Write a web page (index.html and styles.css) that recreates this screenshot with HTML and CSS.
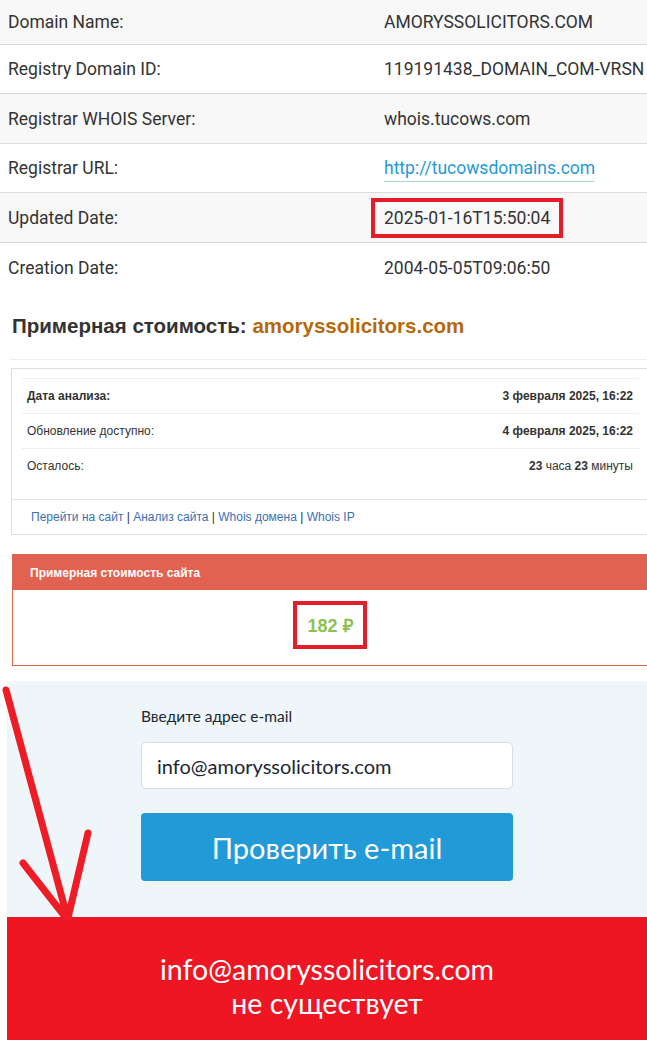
FILE: index.html
```html
<!DOCTYPE html>
<html lang="ru">
<head>
    <meta charset="UTF-8">
    <meta name="viewport" content="width=device-width, initial-scale=1.0">
    <title>amoryssolicitors.com</title>
    <link rel="stylesheet" href="styles.css">
</head>
<body>
    <!-- whois record -->
    <div class="whois">
        <div class="row"><span class="key">Domain Name:</span><span class="val">AMORYSSOLICITORS.COM</span></div>
        <div class="row"><span class="key">Registry Domain ID:</span><span class="val">119191438_DOMAIN_COM-VRSN</span></div>
        <div class="row"><span class="key">Registrar WHOIS Server:</span><span class="val">whois.tucows.com</span></div>
        <div class="row"><span class="key">Registrar URL:</span><span class="val"><a class="url" href="#">http://tucowsdomains.com</a></span></div>
        <div class="row"><span class="key">Updated Date:</span><span class="val"><span class="mark">2025-01-16T15:50:04</span></span></div>
        <div class="row"><span class="key">Creation Date:</span><span class="val">2004-05-05T09:06:50</span></div>
    </div>

    <!-- site cost -->
    <h2 class="cost-title">Примерная стоимость: <span class="domain">amoryssolicitors.com</span></h2>

    <div class="info">
        <div class="info-rows">
            <div class="info-row"><b>Дата анализа:</b><b>3 февраля 2025, 16:22</b></div>
            <div class="info-row"><span>Обновление доступно:</span><b>4 февраля 2025, 16:22</b></div>
            <div class="info-row"><span>Осталось:</span><span><b>23</b> часа <b>23</b> минуты</span></div>
        </div>
        <div class="info-links">
            <a href="#">Перейти на сайт</a> | <a href="#">Анализ сайта</a> | <a href="#">Whois домена</a> | <a href="#">Whois IP</a>
        </div>
    </div>

    <div class="panel">
        <div class="panel-head">Примерная стоимость сайта</div>
        <div class="panel-body"><span class="price">182 ₽</span></div>
    </div>

    <!-- email check -->
    <div class="check">
        <form class="check-form">
            <label class="check-label">Введите адрес e-mail</label>
            <input class="check-input" type="text" value="info@amoryssolicitors.com">
            <button class="check-btn" type="button">Проверить e-mail</button>
        </form>
        <div class="result">info@amoryssolicitors.com<br>не существует</div>
    </div>

    <svg class="arrow" width="100" height="250" viewBox="0 0 100 250">
        <path d="M6 20 L68 250 M23 193 L66 248 M88 163 L68 248" />
    </svg>
</body>
</html>
```

FILE: styles.css
```css
body {
    margin: 0;
    background: #fff;
    overflow-x: hidden;
    position: relative;
}

/* whois */
.whois {
    font-family: Roboto, sans-serif;
    font-size: 17.5px;
    color: #333;
}
.row {
    display: flex;
    align-items: center;
    height: 49px;
    border-bottom: 1px solid #dcdcdc;
}
.row:nth-child(odd) {
    background: #f8f8f8;
}
.row:first-child {
    height: 44px;
}
.row:nth-child(2), .row:nth-child(4) {
    height: 48px;
}
.row:last-child {
    border-bottom: none;
}
.key {
    width: 376px;
    padding-left: 8px;
}
.url {
    color: #1f9ad6;
    text-decoration: none;
    border-bottom: 1px solid #a9d6ee;
    padding-bottom: 3px;
}
.mark {
    display: inline-block;
    padding: 6px 9px;
    margin: -10px -13px;
    border: 4px solid #e31e2a;
}

/* cost */
.cost-title {
    font-family: "Liberation Sans", Arial, sans-serif;
    font-size: 20.5px;
    color: #333;
    margin: 22px 0 0 10px;
    padding: 0 0 21px 2px;
    border-bottom: 1px solid #eee;
}
.domain {
    color: #b7680c;
}
.info {
    font-family: "Liberation Sans", Arial, sans-serif;
    font-size: 12px;
    color: #333;
    margin: 8px 0 0 11px;
    width: 660px;
    border: 1px solid #ddd;
}
.info-rows {
    margin: 9px 0 0 10px;
    width: 617px;
    border-top: 1px solid #eee;
    padding-bottom: 16px;
}
.info-row {
    display: flex;
    justify-content: space-between;
    align-items: center;
    height: 34px;
    padding: 0 6px 0 5px;
    border-bottom: 1px solid #eee;
}
.info-row:last-child {
    border-bottom: none;
}
.info-links {
    border-top: 1px solid #e5e5e5;
    height: 34px;
    line-height: 34px;
    padding-left: 19px;
}
.info-links a {
    color: #3a6fb4;
    text-decoration: none;
}
.panel {
    font-family: "Liberation Sans", Arial, sans-serif;
    margin: 19px 0 0 12px;
    width: 660px;
    border: 1px solid #d9654f;
}
.panel-head {
    background: #e26251;
    color: #fff;
    font-size: 12px;
    font-weight: bold;
    height: 35px;
    line-height: 36px;
    padding-left: 17px;
}
.panel-body {
    height: 75px;
    display: flex;
    align-items: center;
    justify-content: center;
    padding-right: 26px;
}
.price {
    display: inline-block;
    color: #8cc152;
    font-size: 18px;
    font-weight: bold;
    padding: 8px 10px;
    border: 4px solid #e31e2a;
    margin-top: -6px;
}

/* email check */
.check {
    margin: 15px 0 0 7px;
    background: #eef6fa;
    font-family: Lato, sans-serif;
}
.check-form {
    width: 372px;
    margin: 0 auto;
    padding: 26px 0 36px;
    display: flex;
    flex-direction: column;
}
.check-label {
    font-size: 15.5px;
    color: #1c2733;
    margin-bottom: 17px;
}
.check-input {
    height: 47px;
    box-sizing: border-box;
    border: 1px solid #d7dde2;
    border-radius: 5px;
    background: #fff;
    padding: 0 15px;
    font-family: Lato, sans-serif;
    font-size: 20px;
    color: #1c2733;
}
.check-btn {
    margin-top: 24px;
    height: 68px;
    border: none;
    border-radius: 4px;
    background: #219ad7;
    color: #fff;
    font-family: Lato, sans-serif;
    font-size: 29px;
}
.result {
    background: #ee1622;
    color: #fff;
    text-align: center;
    font-size: 28.5px;
    line-height: 34px;
    padding: 35px 0 24px;
}

/* hand-drawn arrow */
.arrow {
    position: absolute;
    left: 0;
    top: 670px;
    pointer-events: none;
}
.arrow path {
    fill: none;
    stroke: #ee1c25;
    stroke-width: 7;
    stroke-linecap: round;
}
```
